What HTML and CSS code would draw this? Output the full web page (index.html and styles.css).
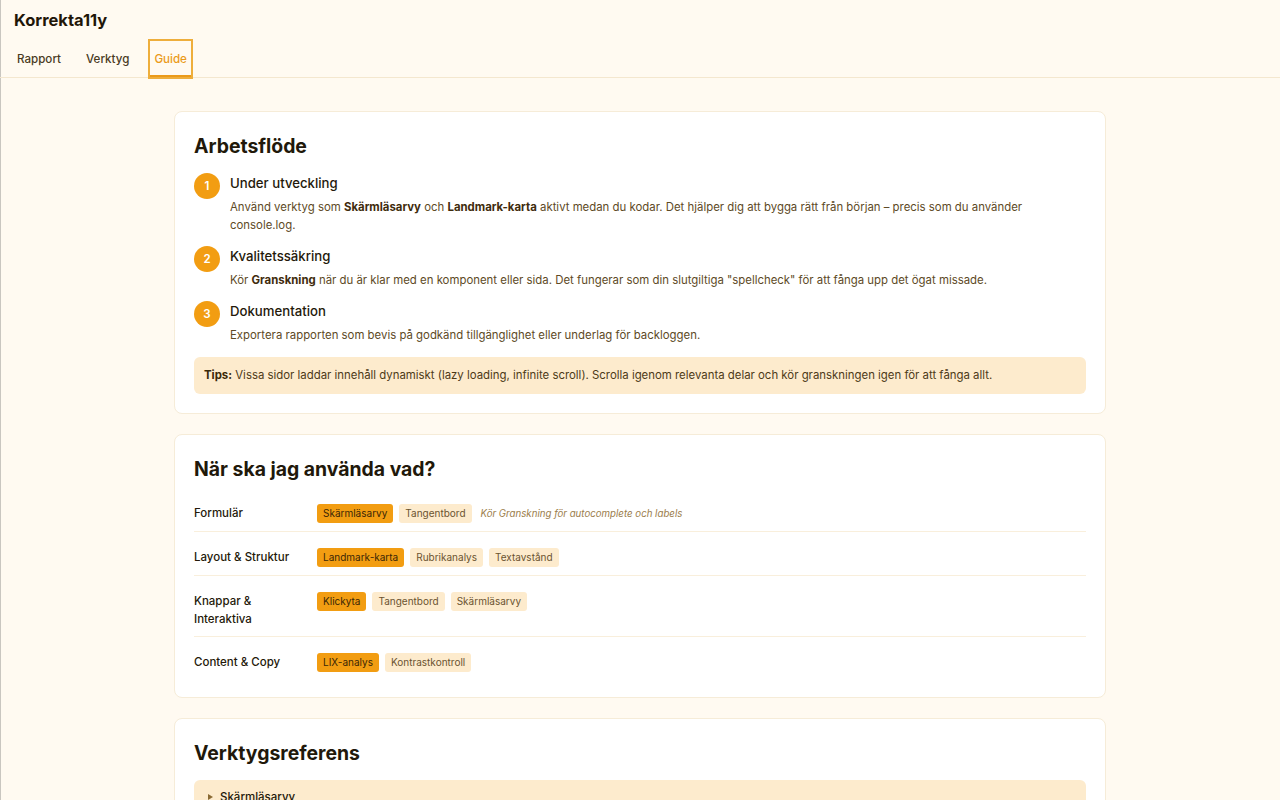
FILE: index.html
```html
<!DOCTYPE html>
<html lang="sv">
<head>
    <meta charset="UTF-8">
    <meta name="viewport" content="width=device-width, initial-scale=1.0">
    <title>Korrekta11y – Guide</title>
    <link rel="stylesheet" href="styles.css">
</head>
<body>
<div class="app">
    <header class="topbar">
        <h1 class="brand">Korrekta11y</h1>
        <nav class="tabs">
            <button class="tab">Rapport</button>
            <button class="tab">Verktyg</button>
            <button class="tab active">Guide</button>
        </nav>
    </header>

    <main class="content">
        <section class="card">
            <h2>Arbetsflöde</h2>
            <ol class="steps">
                <li class="step">
                    <span class="step-num">1</span>
                    <div>
                        <h3>Under utveckling</h3>
                        <p>Använd verktyg som <strong>Skärmläsarvy</strong> och <strong>Landmark-karta</strong> aktivt medan du kodar. Det hjälper dig att bygga rätt från början – precis som du använder console.log.</p>
                    </div>
                </li>
                <li class="step">
                    <span class="step-num">2</span>
                    <div>
                        <h3>Kvalitetssäkring</h3>
                        <p>Kör <strong>Granskning</strong> när du är klar med en komponent eller sida. Det fungerar som din slutgiltiga "spellcheck" för att fånga upp det ögat missade.</p>
                    </div>
                </li>
                <li class="step">
                    <span class="step-num">3</span>
                    <div>
                        <h3>Dokumentation</h3>
                        <p>Exportera rapporten som bevis på godkänd tillgänglighet eller underlag för backloggen.</p>
                    </div>
                </li>
            </ol>
            <div class="tip"><strong>Tips:</strong> Vissa sidor laddar innehåll dynamiskt (lazy loading, infinite scroll). Scrolla igenom relevanta delar och kör granskningen igen för att fånga allt.</div>
        </section>

        <section class="card">
            <h2>När ska jag använda vad?</h2>
            <div class="usage">
                <div class="usage-row">
                    <div class="usage-label">Formulär</div>
                    <div class="tags">
                        <span class="tag primary">Skärmläsarvy</span>
                        <span class="tag">Tangentbord</span>
                        <span class="note">Kör Granskning för autocomplete och labels</span>
                    </div>
                </div>
                <div class="usage-row">
                    <div class="usage-label">Layout &amp; Struktur</div>
                    <div class="tags">
                        <span class="tag primary">Landmark-karta</span>
                        <span class="tag">Rubrikanalys</span>
                        <span class="tag">Textavstånd</span>
                    </div>
                </div>
                <div class="usage-row">
                    <div class="usage-label">Knappar &amp; Interaktiva</div>
                    <div class="tags">
                        <span class="tag primary">Klickyta</span>
                        <span class="tag">Tangentbord</span>
                        <span class="tag">Skärmläsarvy</span>
                    </div>
                </div>
                <div class="usage-row">
                    <div class="usage-label">Content &amp; Copy</div>
                    <div class="tags">
                        <span class="tag primary">LIX-analys</span>
                        <span class="tag">Kontrastkontroll</span>
                    </div>
                </div>
            </div>
        </section>

        <section class="card">
            <h2>Verktygsreferens</h2>
            <details class="ref">
                <summary>Skärmläsarvy</summary>
                <p>Visar hur en skärmläsare tolkar sidan.</p>
            </details>
            <details class="ref">
                <summary>Landmark-karta</summary>
                <p>Visar sidans landmärken.</p>
            </details>
        </section>
    </main>
</div>
</body>
</html>
```

FILE: styles.css
```css
* {
    box-sizing: border-box;
}
body {
    margin: 0;
    font-family: Inter, "Noto Sans", Arial, sans-serif;
    background-color: #fffaf1;
    color: #2a1f0e;
}
.app {
    min-height: 100vh;
    box-shadow: inset 1px 0 0 #c9c6c0;
    padding-bottom: 40px;
}
.topbar {
    border-bottom: 1px solid #f4e7cf;
}
.brand {
    margin: 0;
    padding: 10px 14px 0;
    font-size: 16.5px;
    font-weight: 700;
    line-height: 20px;
    color: #1f1608;
}
.tabs {
    display: flex;
    gap: 17px;
    padding: 11px 12px 0 13px;
}
.tab {
    font-family: inherit;
    background: none;
    border: none;
    border-bottom: 2px solid transparent;
    padding: 11px 4px 9px;
    font-size: 11.6px;
    font-weight: 500;
    line-height: 14px;
    color: #4a3a1e;
    cursor: pointer;
}
.tab.active {
    color: #eb9a1a;
    border-bottom-color: #eb9a1a;
    outline: 2px solid #eeae3c;
}
.content {
    width: 932px;
    margin: 33px auto 0;
    display: flex;
    flex-direction: column;
    gap: 20px;
}
.card {
    background: #fff;
    border: 1px solid #f6ecd8;
    border-radius: 8px;
    padding: 20px 19px 19px;
}
.card h2 {
    margin: 0 0 13px;
    font-size: 19.4px;
    font-weight: 700;
    line-height: 28px;
    color: #21180a;
}
.steps {
    list-style: none;
    margin: 0;
    padding: 0;
}
.step {
    display: flex;
    gap: 10px;
    margin-bottom: 12px;
}
.step:last-child {
    margin-bottom: 0;
}
.step-num {
    flex: none;
    width: 26px;
    height: 26px;
    border-radius: 50%;
    background: #f29d12;
    color: #fff;
    font-size: 11.5px;
    font-weight: 600;
    display: flex;
    align-items: center;
    justify-content: center;
}
.step h3 {
    margin: 0;
    font-size: 13.2px;
    font-weight: 500;
    line-height: 20px;
    color: #24190a;
}
.step p {
    margin: 5px 0 0;
    font-size: 11.4px;
    line-height: 18px;
    color: #5e4a26;
}
.step p strong {
    color: #3f2c0d;
}
.tip {
    margin-top: 13px;
    background: #fdebcd;
    border-radius: 6px;
    padding: 10px;
    font-size: 11.4px;
    line-height: 17px;
    color: #4d3a18;
}
.tip strong {
    color: #3a2808;
}
.usage-row {
    display: flex;
    align-items: flex-start;
    padding: 8px 0;
    margin-bottom: 8px;
    border-bottom: 1px solid #f9efdc;
}
.usage-row:last-child {
    border-bottom: none;
    margin-bottom: 0;
    padding-bottom: 6px;
}
.usage-label {
    width: 123px;
    flex: none;
    font-size: 11.5px;
    font-weight: 500;
    line-height: 18px;
    color: #24190a;
    padding-right: 20px;
}
.tags {
    display: flex;
    align-items: center;
    gap: 6px;
    flex-wrap: wrap;
}
.tag {
    display: inline-block;
    height: 19px;
    line-height: 19px;
    padding: 0 6px;
    border-radius: 3px;
    font-size: 10px;
    background: #fdebcd;
    color: #6b5330;
}
.tag.primary {
    background: #f29d12;
    color: #3a2606;
}
.note {
    margin-left: 3px;
    font-size: 9.7px;
    font-style: italic;
    color: #9a7c4a;
}
.ref {
    background: #fdebcd;
    border-radius: 6px;
    margin-top: 10px;
    padding: 10px 14px;
    font-size: 11.5px;
}
.ref:first-of-type {
    margin-top: 0;
}
.ref summary {
    list-style: none;
    display: flex;
    align-items: center;
    gap: 7px;
    font-weight: 500;
    color: #24190a;
    cursor: pointer;
}
.ref summary::-webkit-details-marker {
    display: none;
}
.ref summary::before {
    content: "";
    border-left: 5px solid #8a6a33;
    border-top: 3.5px solid transparent;
    border-bottom: 3.5px solid transparent;
}
.ref[open] summary::before {
    transform: rotate(90deg);
}
.ref p {
    margin: 8px 0 0;
    color: #5e4a26;
}
```
